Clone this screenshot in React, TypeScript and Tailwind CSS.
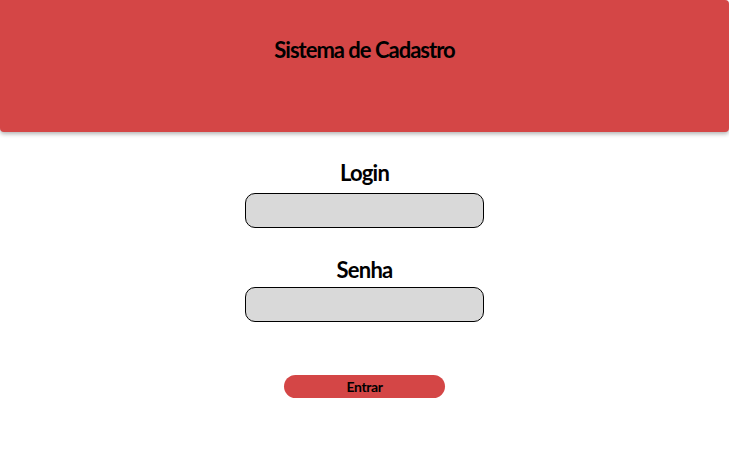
export default function App() {
    return (
        <div
            className="w-[729px] h-[457px] bg-white flex flex-col items-center"
            style={{ fontFamily: 'Lato, "Liberation Sans", sans-serif' }}
        >
            {/* Header */}
            <header className="w-full h-[132px] bg-[#d44646] rounded-b-[4px] rounded-tr-[4px] shadow-[0_2px_4px_rgba(0,0,0,0.3)] flex justify-center pt-[36px]">
                <h1 className="text-[22px] font-bold text-black leading-[27px] tracking-[-1px]">Sistema de Cadastro</h1>
            </header>

            {/* Form */}
            <form className="flex flex-col items-center mt-[27px]">
                <label className="text-[22px] font-bold leading-[28px] text-black tracking-[-0.8px]">Login</label>
                <input type="text" className="mt-[6px] w-[239px] h-[35px] rounded-[10px] border border-black bg-[#d9d9d9] outline-none" />

                <label className="mt-[28px] text-[22px] font-bold leading-[28px] text-black tracking-[-0.8px]">Senha</label>
                <input type="password" className="mt-[3px] w-[239px] h-[35px] rounded-[10px] border border-black bg-[#d9d9d9] outline-none" />

                <button type="button" className="mt-[53px] w-[161px] h-[23px] rounded-full bg-[#d44646] text-[14px] font-bold text-black leading-none tracking-[-0.4px]">
                    Entrar
                </button>
            </form>
        </div>
    );
}
